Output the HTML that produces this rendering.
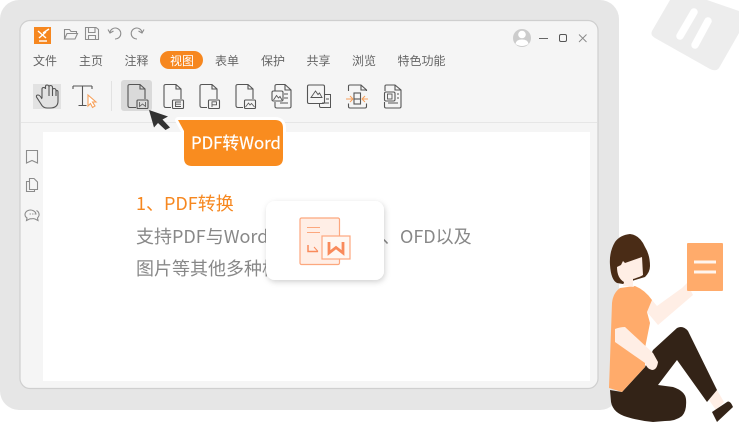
<!DOCTYPE html>
<html><head><meta charset="utf-8"><style>
html,body{margin:0;padding:0;background:#fff}
body{width:739px;height:435px;overflow:hidden;position:relative}
svg{position:absolute;left:0;top:0}
text{font-family:"Noto Sans CJK SC","Liberation Sans",sans-serif}
.m{font-size:12px;fill:#666}
.i{fill:none;stroke:#555;stroke-width:1.1}
.l{fill:none;stroke:#8c8c8c;stroke-width:1.1}
.t{font-size:18px;fill:#888}
</style></head><body>
<svg width="739" height="435" viewBox="0 0 739 435">
<rect x="0" y="0" width="619" height="410" rx="19" fill="#e6e6e6"/>
<!-- top right decorative -->
<path d="M670 0L652 31Q650 35 655 38L710 69Q716 72 719 68L739 33V11L707 0Z" fill="#ededed"/>
<path d="M694 12L680 36M708 21L695 45" stroke="#fff" stroke-width="7.500" stroke-linecap="round"/>
<!-- window -->
<rect x="20" y="20.500" width="578" height="368" rx="10" fill="#f5f5f5" stroke="#cfcfcf" stroke-width="1.200"/>
<line x1="21" y1="122.500" x2="597" y2="122.500" stroke="#e6e6e6"/>
<rect x="43" y="132" width="547" height="249" fill="#fff"/>
<!-- logo -->
<rect x="34" y="27" width="17" height="17" fill="#f6871f"/>
<path d="M38 31L46 38M46 32L39 38M43 33L49 29" stroke="#fff" stroke-width="1.400"/>
<rect x="39" y="40" width="8" height="2" fill="#fff" opacity=".7"/>
<!-- qa icons -->
<path class="l" d="M64.500 39V29.500H69.500L71 31.500H76.500V33.500M64.500 39H75L77.500 33.500H67L64.500 39Z"/>
<path class="l" d="M85.500 27.500H96L98.500 29.500V39.500H85.500ZM88.500 27.500V32.500H95V27.500M88.500 39.500V35.500H95.500V39.500"/>
<path class="l" d="M110 32A5.500 5.500 0 1 1 115 39M108 29.500L110 33L113.500 31"/>
<path class="l" d="M142 32A5.500 5.500 0 1 0 137 39M144 29.500L142 33L138.500 31"/>
<!-- window ctrl -->
<circle cx="522" cy="38" r="9" fill="#cccccc"/>
<circle cx="522" cy="34.500" r="3.800" fill="#fff"/>
<path d="M515.500 44Q516 39.500 522 39.500T528.500 44Q525 46 522 46T515.500 44Z" fill="#fff"/>
<line x1="539" y1="38.500" x2="548" y2="38.500" stroke="#666"/>
<rect x="559.500" y="34.500" width="7" height="7" rx="1.500" fill="none" stroke="#555"/>
<path d="M579 34.500L586.500 42M586.500 34.500L579 42" stroke="#888" stroke-width=".9"/>
<!-- menu -->
<rect x="160" y="51" width="43" height="18" rx="9" fill="#f6871f"/>
<text class="m" x="33" y="65">文件</text>
<text class="m" x="79" y="65">主页</text>
<text class="m" x="124.500" y="65">注释</text>
<text class="m" x="170" y="65" style="fill:#fff">视图</text>
<text class="m" x="215" y="65">表单</text>
<text class="m" x="261" y="65">保护</text>
<text class="m" x="306.500" y="65">共享</text>
<text class="m" x="352" y="65">浏览</text>
<text class="m" x="397.500" y="65">特色功能</text>
<!-- tools -->
<rect x="33" y="84" width="28" height="25" fill="#e2e2e2"/>
<path class="i" stroke-width="1.200" d="M42 98V89Q42 87.500 43.700 87.500T45.500 89V86.500Q45.500 85 47 85T49 86.500V96M49 87Q49 85.500 50.500 85.500T52.500 87V96M52.500 90Q52.500 88.500 54 88.500T56 90V96M56 92Q56 90.500 57 90.500T58 92V101Q58 108 50 108H47Q43 108 41 104L36.500 97Q36 95 38 95Q40 95 42 99"/>
<path class="i" d="M73 86H92M82.500 86V105.500M78.500 105.500H86.500M73 86V89M92 86V89"/>
<path d="M88 95L96 102H92.500L95 106L92.500 107.500L90.500 103.500L88 106Z" fill="#fff" stroke="#f6a05a" stroke-width="1.100"/>
<line x1="111.500" y1="81" x2="111.500" y2="111" stroke="#e2e2e2"/>
<rect x="121" y="80" width="31" height="31" rx="3" fill="#dadada"/>
<!-- doc icons -->
<g class="i">
<path d="M136 107.500H130Q128 107.500 128 105.500V86Q128 84.500 130 84.500H140L145 89V99M140 84.500V89H145"/>
<rect x="137" y="100" width="11" height="8.500" rx="1"/>
<path d="M139.500 102V106.500L142.500 104L145.500 106.500V102" stroke-width=".8"/>
<path d="M171 107.500H166Q164 107.500 164 105.500V86Q164 84.500 166 84.500H176L181 89V99M176 84.500V89H181"/>
<rect x="172.500" y="100" width="11" height="8.500" rx="1"/>
<path d="M181 102H175.500V106.500H181M175.500 104.200H181" stroke-width=".9"/>
<path d="M207 107.500H202Q200 107.500 200 105.500V86Q200 84.500 202 84.500H212L217 89V99M212 84.500V89H217"/>
<rect x="208.500" y="100" width="11" height="8.500" rx="1"/>
<path d="M212 107V101.800H216.500V104.800H212" stroke-width=".9"/>
<path d="M243 107.500H238Q236 107.500 236 105.500V86Q236 84.500 238 84.500H248L253 89V99M248 84.500V89H253"/>
<rect x="244.500" y="100" width="11" height="8.500" rx="1"/>
<path d="M245.500 107L248.500 103L250 105L251.500 103.500L254.500 107" stroke-width=".8"/>
<path d="M275 91V86Q275 84.500 277 84.500H285L291 90V106.500Q291 108 289 108H277Q275 108 275 106.500V102M285 84.500V90H291M284 94H288M284 98H288M280 103H288"/>
<rect x="272" y="91" width="11" height="10" rx="1.500"/>
<path d="M273.500 100L276.500 95.500L278.500 98L280 96.500L282 100" stroke-width=".9"/>
<rect x="307.500" y="85" width="17" height="18.500" rx="1.500"/>
<path d="M311 97.500L315.500 91L318 94.500L319.500 93L322 97.500Z" stroke-width=".9"/>
<path d="M324.500 94.500H330.500V107.500H321Q319.500 107.500 319.500 106V103.500M326 99H329M322 103H329" stroke-width="1"/>
<path d="M348.500 91V86Q348.500 85 350 85H361L366.500 90V91M366.500 103.500V106.500Q366.500 108 365 108H350Q348.500 108 348.500 106.500V103.500M361 85V90H366.500"/>
<rect x="354" y="93" width="6.500" height="11"/>
<line x1="354" y1="99" x2="360.500" y2="99"/>
<path d="M385 91V86Q385 85 386.500 85H395L401 90V106.500Q401 108 399.500 108H386Q384.500 108 384.500 106.500V102M395 85V90H401M397 94H399M397 98H399M388 103H398"/>
<rect x="384.500" y="92" width="10.500" height="9" rx="1.500" fill="#f5f5f5"/>
<rect x="387.500" y="94" width="4.500" height="5" stroke-width=".9"/>
</g>
<path d="M346 99H353M350 96L353 99L350 102M368 99H362M365 96L362 99L365 102" fill="none" stroke="#f6a05a" stroke-width="1"/>
<!-- side icons -->
<g class="l">
<path d="M26.500 150.500H37.500V163L32 160.500L26.500 163Z"/>
<path d="M29.500 178.500H34L37.500 182V189.500H29.500ZM29.500 181.500H26.500V191.500H34.500V189.500"/>
<path d="M36 214.500A5.500 4.500 0 1 0 27 218L26.500 220.500L30 218.800Q32 219 33 218.500M36.500 210.500Q39.500 212 39 215.500Q38.500 217 37.500 218L38 220.500L35 219L33 218.500"/>
</g>
<path d="M29.500 214H31M32 214H33.500M34.500 214H35.500" stroke="#777" stroke-width=".8"/>
<!-- content text -->
<text x="136" y="210" font-size="18" fill="#f6871f">1、PDF转换</text>
<text class="t" x="136" y="243">支持PDF与Word</text>
<text class="t" x="382" y="243">、OFD以及</text>
<text class="t" x="136" y="275">图片等其他多种格式</text>
<!-- cursor -->
<path d="M149 110L168 116.500L162.500 119.500L170 127.500L165.500 130L158 123L154 127.500Z" fill="#333"/>
<!-- tooltip -->
<path d="M178 120H275Q283 120 283 128V158Q283 166 275 166H192Q184 166 184 158V131Z" fill="#f98c1f" stroke="#fff" stroke-width="6" stroke-linejoin="round" paint-order="stroke"/>
<text x="191" y="149" font-size="16.800" fill="#fff" stroke="#fff" stroke-width=".2">PDF转Word</text>
<!-- card -->
<defs><filter id="s" x="-20%" y="-20%" width="140%" height="140%"><feDropShadow dx="1" dy="2" stdDeviation="3" flood-color="#000" flood-opacity=".18"/></filter></defs>
<rect x="266" y="201" width="118" height="79" rx="9" fill="#fff" filter="url(#s)"/>
<rect x="300" y="218" width="39.500" height="46.500" rx="1.500" fill="#ffeee6" stroke="#fca77e" stroke-width="1.200"/>
<path d="M307 227.500H320M307 232.500H320" stroke="#fca77e"/>
<path d="M308 245V251.500H318" fill="none" stroke="#f98a5b" stroke-width="1.500"/>
<path d="M314 247L318 251.500" stroke="#f98a5b" stroke-width="1"/>
<rect x="322" y="236" width="28" height="23" fill="#fff7f2" stroke="#fca77e" stroke-width="1.200"/>
<path d="M329 242V253L336 247.500L343 253V242" fill="none" stroke="#f98a5b" stroke-width="2.800"/>
<!-- person -->
<path d="M652 300L647 312L658 325L693 295L687 283L682 288L657 306Z" fill="#ffeee5"/>
<rect x="687" y="243" width="36" height="48" rx="1" fill="#ffab6b"/>
<path d="M694 262H716M694 272H716" stroke="#fff5ee" stroke-width="3"/>
<path d="M709 400L717 390L724 402L716 410Z" fill="#ffeee5"/>
<path d="M610 390L622 392L645 367L653 350L677 328Q683 325 688 331L717 390L707 402L677 360L658 385L673 387Q685 391 686 399Q687 411 682 416Q676 421 665 421L653 422Q640 421 627 417Q613 413 611 402Z" fill="#332317"/>
<path d="M712 412L727 402Q730 400 733 407L717 422Z" fill="#332317"/>
<path d="M620 288L635 286Q645 290 652 300L647 312L650 323L645 348V367L622 392L609 388L612 303Q613 293 620 288Z" fill="#ffab6b"/>
<path d="M615 329Q620 327 625 327L653 353L658 362Q657 370 652 370Q647 369 645 363L615 342Z" fill="#ffeee5"/>
<path d="M630 234Q620 235 615 242Q609 252 610 265Q611 280 617 283L623 284L635 280L645 277Q650 272 650 266Q650 255 645 247Q640 235 630 234Z" fill="#4a2c16"/>
<path d="M617 267L621 265L623 261L625 263L642 257L643 275Q640 277 633 279V285L634 287L623 286L624 282Q617 278 617 267Z" fill="#ffeee5"/>
</svg>
</body></html>
